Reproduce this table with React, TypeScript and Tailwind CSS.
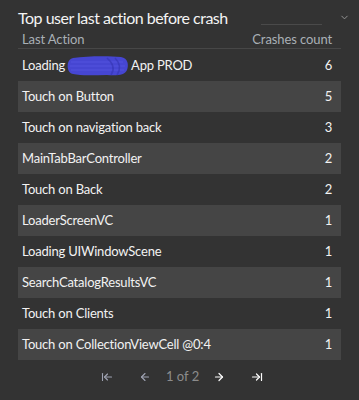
import React from "react";
import { ArrowLeftToLine, ArrowLeft, ArrowRight, ArrowRightToLine, ChevronDown } from "lucide-react";

const rows: [string, number][] = [
  ["Loading", 6],
  ["Touch on Button", 5],
  ["Touch on navigation back", 3],
  ["MainTabBarController", 2],
  ["Touch on Back", 2],
  ["LoaderScreenVC", 1],
  ["Loading UIWindowScene", 1],
  ["SearchCatalogResultsVC", 1],
  ["Touch on Clients", 1],
  ["Touch on CollectionViewCell @0:4", 1],
];

function Scribble() {
  return (
    <svg width="62" height="22" viewBox="0 0 62 22" className="mx-[2px] shrink-0">
      <path
        d="M6 3 C20 1 42 1 54 2 C61 3 62 10 60 15 C58 20 50 21 40 20 C28 20 14 21 6 19 C1 18 0 12 1 8 C2 5 3 4 6 3 Z"
        fill="#4646d2"
      />
      <path d="M4 7 H56 M3 11 H58 M4 15 H57" stroke="#5a5ae6" strokeWidth="1" opacity="0.6" />
      <path d="M40 3 C46 8 48 14 44 20 M48 3 C53 8 54 14 50 20" stroke="#3434b0" strokeWidth="1.5" fill="none" opacity="0.6" />
    </svg>
  );
}

export default function App() {
  return (
    <div
      className="w-[359px] h-[400px] bg-[#333333] text-white overflow-hidden relative"
      style={{ fontFamily: 'Lato, "Noto Sans", sans-serif' }}
    >
      <div className="flex items-start pl-[18px] pt-[5px] whitespace-nowrap">
        <div className="w-[243px] shrink-0 text-[16px] leading-[26px] tracking-[-0.5px] text-[#f4f4f4]">
          Top user last action before crash
        </div>
        <div className="mt-[19px] w-[61px] h-[1px] bg-[#4a4a4a] shrink-0" />
        <ChevronDown size={11} className="ml-[17px] mt-[7px] text-[#9a9a9a] shrink-0" strokeWidth={2} />
      </div>
      <div className="mx-[18px] mt-[1px]">
        <div className="flex justify-between items-center h-[17px] px-[4px] pr-[9px] text-[13px] tracking-[-0.1px] text-[#a9b0b6] border-b border-[#474747]">
          <span>Last Action</span>
          <span>Crashes count</span>
        </div>
        <div className="mt-[1px]">
          {rows.map(([label, n], i) => (
            <div
              key={i}
              className={`flex items-center justify-between h-[31px] pl-[4px] pr-[9px] text-[13px] tracking-[-0.2px] text-[#f2f2f2] whitespace-nowrap ${i % 2 === 1 ? "bg-[#454545]" : ""}`}
            >
              {i === 0 ? (
                <span className="flex items-center">
                  Loading
                  <Scribble />
                  App PROD
                </span>
              ) : (
                <span>{label}</span>
              )}
              <span>{n}</span>
            </div>
          ))}
        </div>
      </div>
      <div className="flex items-center pl-[101px] mt-[8px] h-[18px] text-[13px]">
        <ArrowLeftToLine size={12} className="text-[#a0a4b4] shrink-0" strokeWidth={2.2} />
        <ArrowLeft size={12} className="text-[#a0a4b4] ml-[26px] shrink-0" strokeWidth={2.2} />
        <span className="text-[#8c8c8c] ml-[15px]">1 of 2</span>
        <ArrowRight size={12} className="text-white ml-[14px] shrink-0" strokeWidth={2.4} />
        <ArrowRightToLine size={12} className="text-white ml-[26px] shrink-0" strokeWidth={2.4} />
      </div>
    </div>
  );
}
